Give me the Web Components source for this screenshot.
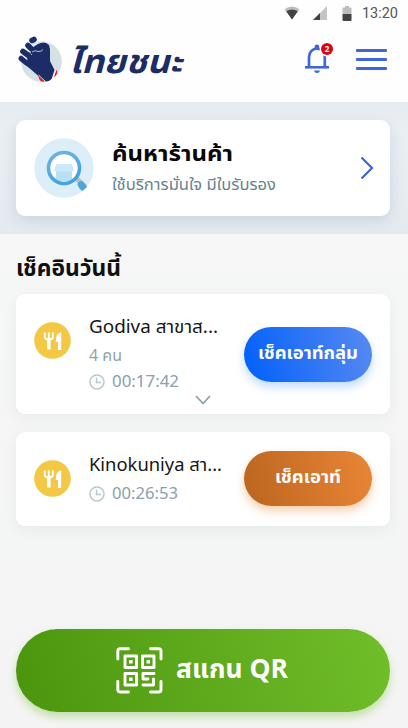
<!DOCTYPE html>
<html lang="th">
<head>
<meta charset="utf-8">
<title>ไทยชนะ</title>
<style>
html,body{margin:0;height:100%;overflow:hidden}
body{font-family:"Noto Sans Thai","Noto Sans","Open Sans",sans-serif;background:#f5f6f6}
</style>
</head>
<body>
<thai-app></thai-app>
<script>
const define = (name, html, after) => customElements.define(name, class extends HTMLElement {
  connectedCallback() {
    if (this.shadowRoot) return;
    const t = document.createElement('template');
    t.innerHTML = html;
    this.attachShadow({mode: 'open'}).append(t.content.cloneNode(true));
    if (after) after(this);
  }
});

/* One line of text, condensed or widened to the width given in "w". */
define('fit-text', `<style>
:host{display:block;white-space:nowrap;line-height:1.4}
span{display:inline-block;transform-origin:0 50%}
</style><span><slot></slot></span>`, el => {
  const s = el.shadowRoot.querySelector('span');
  const w = +el.getAttribute('w');
  el.style.width = w + 'px';
  const natural = s.getBoundingClientRect().width;
  if (natural) s.style.transform = `scaleX(${w / natural})`;
});

define('status-bar', `<style>
:host{display:flex;height:26px;align-items:center;justify-content:flex-end;padding-right:10px;box-sizing:border-box;color:#555}
svg{display:block}
.wifi{margin-right:13px}.cell{margin-right:15px}.bat{margin-right:10px}
fit-text{font:14px/20px Roboto,sans-serif}
</style>
<svg class="wifi" width="16" height="14" viewBox="0 0 16 14"><path d="M.5 3.2Q8-2.4 15.500 3.200L8 13.500z" fill="#bdbdbd"/><path d="M2.200 5.200Q8 2 13.800 5.200L8 13.500z" fill="#424242"/></svg>
<svg class="cell" width="14" height="14" viewBox="0 0 14 14"><path d="M0 14L14 0V14z" fill="#c4c4c4"/><path d="M0 14L7 7V14z" fill="#424242"/></svg>
<svg class="bat" width="10" height="15" viewBox="0 0 10 15"><path d="M3 0H7V1.500H8.500Q9.500 1.500 9.500 2.500V8H.5V2.500Q.5 1.500 1.500 1.500H3z" fill="#bdbdbd"/><path d="M.5 8H9.500V14Q9.500 15 8.500 15H1.500Q.5 15 .5 14z" fill="#424242"/></svg>
<fit-text w="36">13:20</fit-text>`);

define('fist-logo', `<style>:host{display:block;width:46px;height:48px}svg{display:block}</style>
<svg width="46" height="48" viewBox="0 0 46 48">
<circle cx="23.500" cy="26.500" r="20.300" fill="#d5e1e5"/>
<path d="M13 13L20 9Q27 5.500 31 10L32 14V26L36.500 35L33.500 44Q30 48 25.500 45.500L13 34.500L8 30.500L9 24L11 20z" fill="#1c2c66"/>
<g stroke="#1c2c66" stroke-width="5.600" stroke-linecap="round" fill="none"><path d="M10 10.500L13 13.500M14 5.500L16 4.500M5 16.500L10.500 20.500M3.300 23.500L9 28"/></g>
<path d="M7 13.200L13 17.500M3.500 20L9.500 24.800M11.800 7.600L15.500 11.500L20 7.500" fill="none" stroke="#f3f6f8" stroke-width="1"/>
<path d="M14 17Q17.500 14.500 20 16.500Q23.500 17 25 14.500M12.500 18.500L14 20" fill="none" stroke="#c3ccdc" stroke-width=".9"/>
<path d="M20.500 40.500L27 46.800L23.500 46.500Q20.500 44.500 20.500 40.500zM38.300 34.500Q41 38.500 35.800 42.300z" fill="#e61a22"/>
<path d="M20.500 40L27.500 46.500M38 34.500L35.300 42.500" stroke="#fff" stroke-width=".8"/>
</svg>`);

define('bell-icon', `<style>
:host{display:block;position:relative;width:30px;height:32px}
svg{display:block}
b{position:absolute;left:17px;top:0;width:12px;height:12px;border-radius:50%;background:#e00012;color:#fff;font:bold 8px/12px "Open Sans",sans-serif;text-align:center}
</style>
<svg width="30" height="32" viewBox="0 0 30 32"><path d="M5 25V14Q5.500 6.500 12.800 5.500Q20.500 6.500 20.800 14V25" fill="none" stroke="#3f66d8" stroke-width="2.700"/><path d="M1 24.300H25" stroke="#3f66d8" stroke-width="2.600"/><circle cx="23" cy="6" r="7.500" fill="#fff"/><path d="M10.600 6V3.600Q10.600 1.400 12.900 1.400T15.200 3.600V6zM10 27.500H16Q15.500 30 13 30T10 27.500z" fill="#3f66d8"/></svg><b>2</b>`);

define('app-header', `<style>
:host{display:flex;flex-direction:column;height:102px;background:#fefefe}
.row{display:flex;align-items:flex-start;padding:9px 21px 0 18px}
.name{margin:5px auto 0 5px;color:#1c2c66;font-size:33px;font-weight:700;font-style:italic;line-height:46px}
bell-icon{margin:8px 22px 0 0}
.menu{display:grid;gap:6px;width:31px;margin-top:14px}
.menu i{height:3px;background:#3f66d8;border-radius:1px}
</style>
<status-bar></status-bar>
<div class="row"><fist-logo></fist-logo><fit-text class="name" w="113">ไทยชนะ</fit-text><bell-icon></bell-icon><div class="menu"><i></i><i></i><i></i></div></div>`);

define('search-icon', `<style>:host{display:block}svg{display:block}</style>
<svg width="60" height="60" viewBox="0 0 60 60"><defs><linearGradient id="g" x2=".4" y2="1"><stop stop-color="#6cb5e8"/><stop offset="1" stop-color="#44a3dc"/></linearGradient></defs>
<circle cx="30" cy="30" r="29.700" fill="#dceef7"/><path d="M40.500 42L44.500 39L50 44L46 48z" fill="#b9c2c9"/>
<circle cx="30" cy="30" r="15.500" fill="#fff"/>
<path d="M22 32H38V43H22z" fill="#b9dff4"/><path d="M22 26H38L40 32Q39 34 37 33Q35 34 33 33Q30 34 27 33Q25 34 23 33Q21 34 20 32z" fill="#cce9fb"/>
<circle cx="30" cy="30" r="15.500" fill="none" stroke="url(#g)" stroke-width="3.600"/>
<path d="M43.500 47Q43.500 43 48 43Q51.500 45 53 49L48.500 53Q45 51 43.500 47z" fill="#50a5dd"/></svg>`);

define('search-card', `<style>
:host{display:flex;box-sizing:border-box;height:96px;border-radius:9px;background:#fff;box-shadow:0 5px 14px #70869e38;padding:18px 16px 0 18px}
.copy{flex:1;padding:2px 0 0 18px}
.t{font-size:22px;font-weight:700;line-height:30px;color:#090909}
.s{font-size:15px;line-height:24px;margin-top:4px;color:#678390}
svg{margin-top:18px}
</style><search-icon></search-icon><div class="copy"><fit-text class="t" w="121">ค้นหาร้านค้า</fit-text><fit-text class="s" w="164">ใช้บริการมั่นใจ มีใบรับรอง</fit-text></div>
<svg width="14" height="24" viewBox="0 0 14 24"><path d="M1.500 1.500L12 12L1.500 22.500" fill="none" stroke="#3f66d8" stroke-width="2.200"/></svg>`);

define('pill-button', `<style>
:host{display:flex;align-items:center;justify-content:center;box-sizing:border-box;width:128px;height:55px;border-radius:28px;color:#fff;font-size:17.500px;font-weight:700;flex:none;background:linear-gradient(75deg,#0863fa 8%,#588af0);box-shadow:0 5px 10px #5fa4f466}
:host([tone=orange]){background:linear-gradient(75deg,#bb651f,#e98636);box-shadow:0 5px 10px #e9863666}
</style><slot></slot>`);

define('food-icon', `<style>:host{display:block}svg{display:block}</style>
<svg width="37" height="37" viewBox="0 0 37 37"><circle cx="18.500" cy="18.500" r="18.300" fill="#f4c844"/><path d="M10.800 10.500V15Q10.800 17.500 14.800 17.500T18.800 15V10.500M14.800 10.500V27" fill="none" stroke="#fff" stroke-width="1.900"/><path d="M13 16H16.600V27.500H13z" fill="#fff"/><path d="M27.200 10.300V28H24V20H21.800Q21.500 11.500 27.200 10.300z" fill="#fff"/></svg>`);

define('clock-icon', `<style>:host{display:block}svg{display:block}</style>
<svg width="16" height="16" viewBox="0 0 16 16" fill="none" stroke="#b6c7d1" stroke-width="1.500"><circle cx="8" cy="8" r="7"/><path d="M7.500 3.500V8.500H12"/></svg>`);

define('visit-card', `<style>
:host{position:relative;display:flex;box-sizing:border-box;border-radius:9px;background:#fff;box-shadow:0 4px 14px #8293a01c;padding-left:18px}
food-icon{margin-top:28px}
.info{flex:1;padding:20px 0 0 18px}
.time{display:flex;align-items:center;gap:7px;height:28px}
pill-button{margin:33px 18px 0 0}
:host([compact]) pill-button{margin-top:19px}
.more{position:absolute;left:179px;top:101px;display:none}
:host([more]) .more{display:block}
::slotted([slot=title]){font-size:18px;line-height:27px;color:#161616}
::slotted([slot=people]){font-size:16px;line-height:24px;margin-top:3px;color:#8fa4ae}
::slotted([slot=time]){font-size:16px;line-height:24px;color:#8aa0ac}
:host([compact]) .time{margin-top:1px}
</style><food-icon></food-icon><div class="info"><slot name="title"></slot><slot name="people"></slot><div class="time"><clock-icon></clock-icon><slot name="time"></slot></div></div>
<pill-button><slot name="action"></slot></pill-button>
<svg class="more" width="16" height="10" viewBox="0 0 16 10"><path d="M1 1L8 8.500L15 1" fill="none" stroke="#8ba0ac" stroke-width="1.700"/></svg>`, el => {
  if (el.hasAttribute('tone')) el.shadowRoot.querySelector('pill-button').setAttribute('tone', el.getAttribute('tone'));
});

define('scan-button', `<style>
:host{display:flex;align-items:center;box-sizing:border-box;height:83px;border-radius:42px;padding-left:100px;color:#fff;background:linear-gradient(75deg,#4b950e,#71be2a);box-shadow:0 5px 9px #78c03a66}
fit-text{font-size:26px;font-weight:700;line-height:38px;margin:-2px 0 0 13px}
</style>
<svg width="47" height="47" viewBox="0 0 47 47" fill="none" stroke="#fff" stroke-width="2.900" stroke-linecap="round"><path d="M1.800 12V4Q1.800 1.800 4 1.800H12.500M34.500 1.800H42.500Q45 1.800 45 4V12M45 34.500V42.500Q45 45 42.500 45H34.500M12.500 45H4Q1.800 45 1.800 42.500V34.500"/><g stroke-linejoin="round"><path d="M9 9H20.500V20.500H9zM26.500 9H38V20.500H26.500zM9 26.500H20.500V38H9z"/><path d="M38 26.500H27V32H32M37.500 32V38H27"/></g><g fill="#fff" stroke="none"><path d="M13 13H16.600V16.600H13zM30.500 13H34V16.600H30.500zM13 30.500H16.600V34H13z"/></g></svg>
<fit-text w="112">สแกน QR</fit-text>`);

define('thai-app', `<style>
:host{display:flex;flex-direction:column;box-sizing:border-box;height:728px;background:linear-gradient(#f7f8f8,#f4f4f4)}
.band{box-sizing:border-box;height:132px;padding:18px 18px 0 16px;background:linear-gradient(#e6ebf0,#eaeff4 20%,#e5eaf0);flex:none}
app-header{flex:none}
main{flex:1;display:flex;flex-direction:column;padding:18px 18px 16px 16px}
.h{font-size:23px;font-weight:700;line-height:34px;color:#101010}
.a{height:120px;margin-top:8px}.b{height:94px;margin-top:18px}
scan-button{margin-top:auto}
</style>
<app-header></app-header><div class="band"><search-card></search-card></div>
<main><fit-text class="h" w="105">เช็คอินวันนี้</fit-text>
<visit-card class="a" more><fit-text slot="title" w="129">Godiva สาขาส...</fit-text><fit-text slot="people" w="33">4 คน</fit-text><fit-text slot="time" w="67">00:17:42</fit-text><fit-text slot="action" w="100">เช็คเอาท์กลุ่ม</fit-text></visit-card>
<visit-card class="b" compact tone="orange"><fit-text slot="title" w="133">Kinokuniya สา...</fit-text><fit-text slot="time" w="66">00:26:53</fit-text><fit-text slot="action" w="66">เช็คเอาท์</fit-text></visit-card>
<scan-button></scan-button></main>`);
</script>
</body>
</html>
